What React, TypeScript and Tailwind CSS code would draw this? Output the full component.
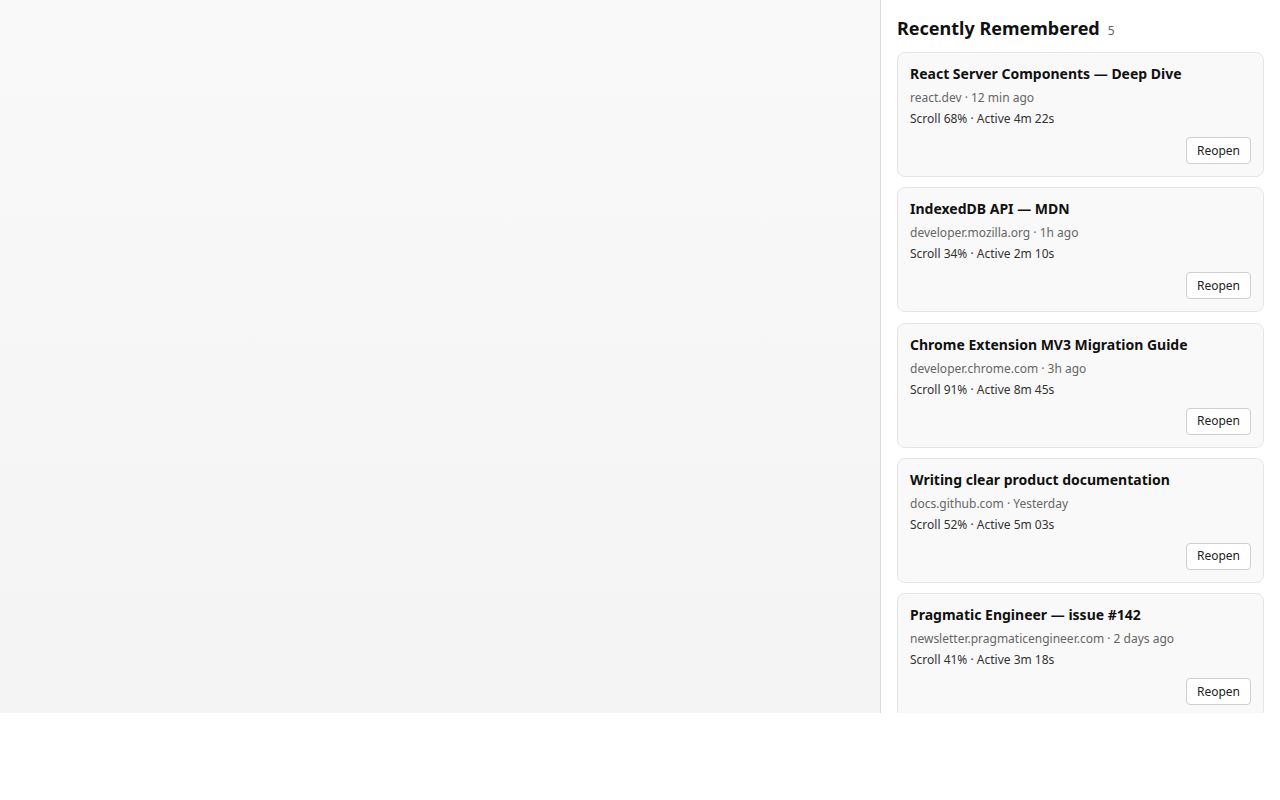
import { FC } from "react";

type Entry = {
  title: string;
  domain: string;
  when: string;
  scroll: string;
  active: string;
};

const entries: Entry[] = [
  { title: "React Server Components — Deep Dive", domain: "react.dev", when: "12 min ago", scroll: "68%", active: "4m 22s" },
  { title: "IndexedDB API — MDN", domain: "developer.mozilla.org", when: "1h ago", scroll: "34%", active: "2m 10s" },
  { title: "Chrome Extension MV3 Migration Guide", domain: "developer.chrome.com", when: "3h ago", scroll: "91%", active: "8m 45s" },
  { title: "Writing clear product documentation", domain: "docs.github.com", when: "Yesterday", scroll: "52%", active: "5m 03s" },
  { title: "Pragmatic Engineer — issue #142", domain: "newsletter.pragmaticengineer.com", when: "2 days ago", scroll: "41%", active: "3m 18s" },
];

const EntryCard: FC<{ entry: Entry }> = ({ entry }) => {
  return (
    <div className="shrink-0 rounded-lg border border-[#e5e5e5] bg-[#f9f9f9] p-3 flex flex-col">
      <h3 className="text-[14px] leading-[17px] font-bold text-[#111]">{entry.title}</h3>
      <p className="mt-[7px] text-[12px] leading-[17px] text-[#666]">
        {entry.domain} · {entry.when}
      </p>
      <p className="mt-[4px] text-[12px] leading-[17px] text-[#333]">
        Scroll {entry.scroll} · Active {entry.active}
      </p>
      <button className="mt-[10px] self-end h-[27px] px-[10px] rounded-[4px] border border-[#cfcfcf] bg-white text-[12px] text-[#222]">
        Reopen
      </button>
    </div>
  );
};

const App: FC = () => {
  return (
    <div
      className="h-[713px] flex overflow-hidden"
      style={{ fontFamily: '"Noto Sans", "Open Sans", sans-serif' }}
    >
      <main className="flex-1 bg-gradient-to-b from-[#f9f9f9] to-[#f4f4f4]" />
      <aside className="w-[400px] shrink-0 border-l border-[#dcdcdc] bg-white px-4 pt-4 overflow-hidden">
        <div className="flex items-baseline gap-2 mb-3">
          <h2 className="text-[18px] leading-6 font-bold text-[#111]">Recently Remembered</h2>
          <span className="text-[12px] text-[#666]">{entries.length}</span>
        </div>
        <div className="flex flex-col gap-[10.25px]">
          {entries.map((e) => (
            <EntryCard key={e.title} entry={e} />
          ))}
        </div>
      </aside>
    </div>
  );
};

export default App;
